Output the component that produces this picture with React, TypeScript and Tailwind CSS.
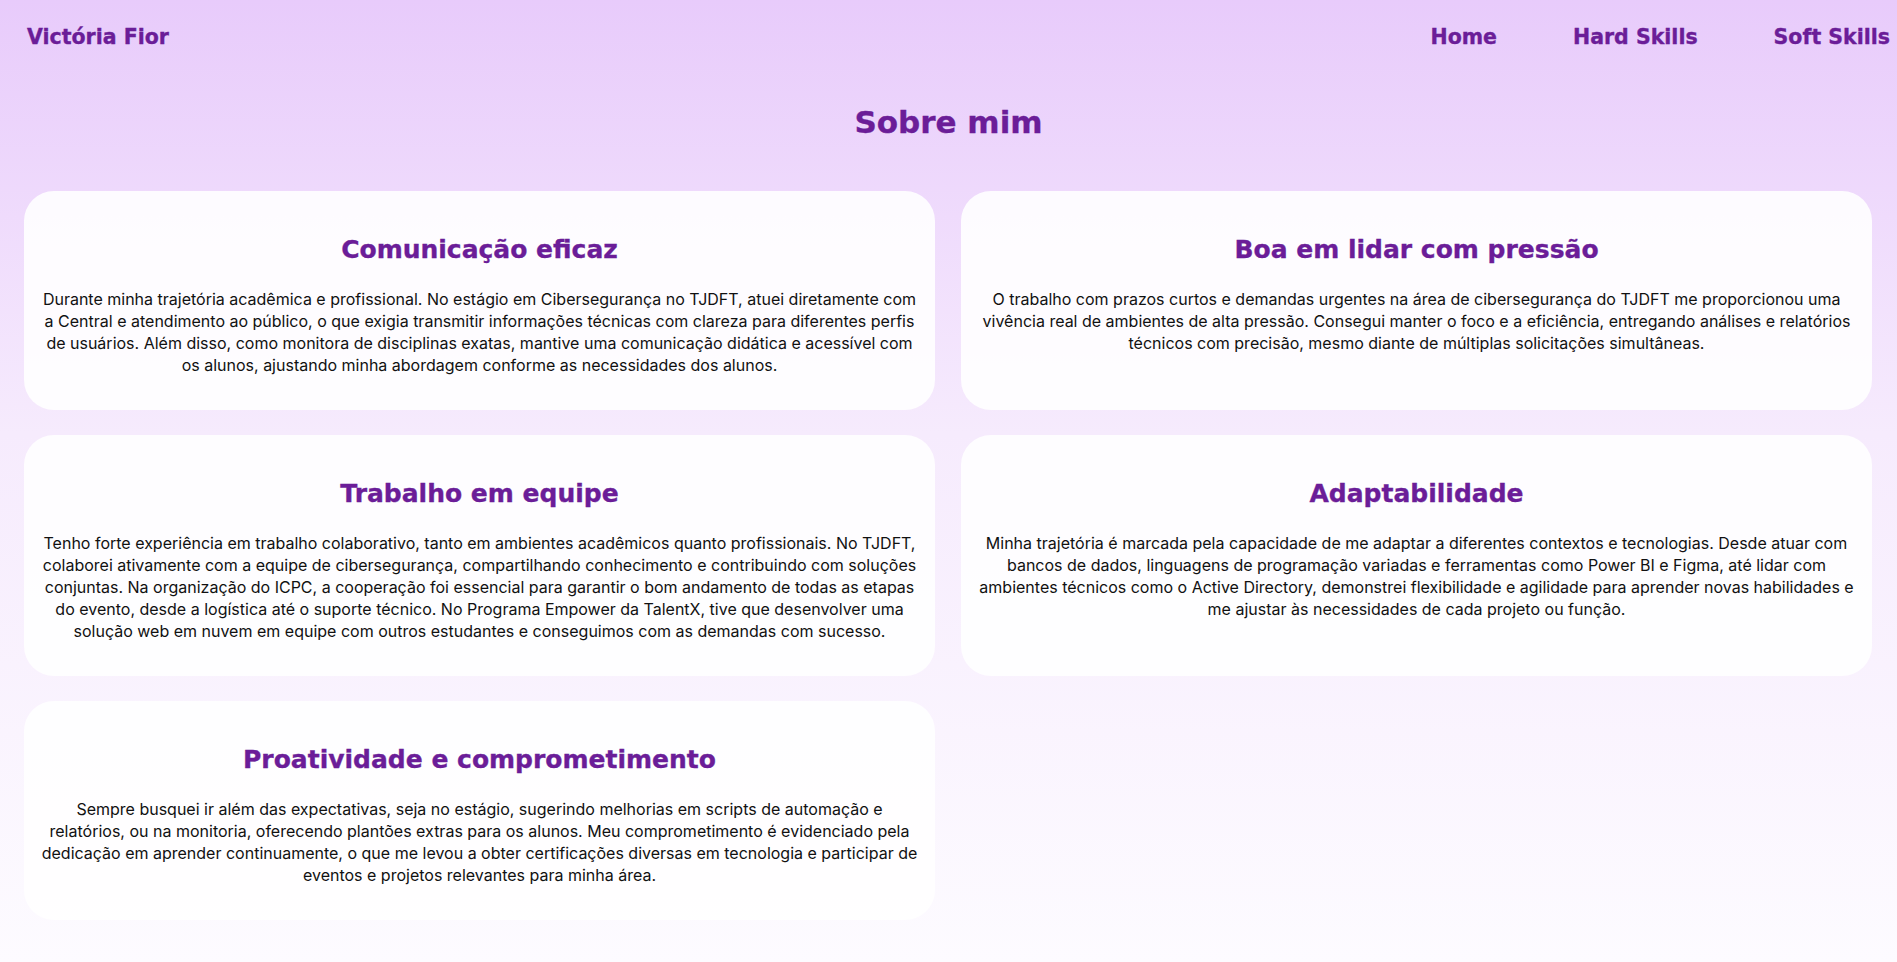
const cards = [
  {
    title: 'Comunicação eficaz',
    text: 'Durante minha trajetória acadêmica e profissional. No estágio em Cibersegurança no TJDFT, atuei diretamente com a Central e atendimento ao público, o que exigia transmitir informações técnicas com clareza para diferentes perfis de usuários. Além disso, como monitora de disciplinas exatas, mantive uma comunicação didática e acessível com os alunos, ajustando minha abordagem conforme as necessidades dos alunos.',
  },
  {
    title: 'Boa em lidar com pressão',
    text: 'O trabalho com prazos curtos e demandas urgentes na área de cibersegurança do TJDFT me proporcionou uma vivência real de ambientes de alta pressão. Consegui manter o foco e a eficiência, entregando análises e relatórios técnicos com precisão, mesmo diante de múltiplas solicitações simultâneas.',
  },
  {
    title: 'Trabalho em equipe',
    text: 'Tenho forte experiência em trabalho colaborativo, tanto em ambientes acadêmicos quanto profissionais. No TJDFT, colaborei ativamente com a equipe de cibersegurança, compartilhando conhecimento e contribuindo com soluções conjuntas. Na organização do ICPC, a cooperação foi essencial para garantir o bom andamento de todas as etapas do evento, desde a logística até o suporte técnico. No Programa Empower da TalentX, tive que desenvolver uma solução web em nuvem em equipe com outros estudantes e conseguimos com as demandas com sucesso.',
  },
  {
    title: 'Adaptabilidade',
    text: 'Minha trajetória é marcada pela capacidade de me adaptar a diferentes contextos e tecnologias. Desde atuar com bancos de dados, linguagens de programação variadas e ferramentas como Power BI e Figma, até lidar com ambientes técnicos como o Active Directory, demonstrei flexibilidade e agilidade para aprender novas habilidades e me ajustar às necessidades de cada projeto ou função.',
  },
  {
    title: 'Proatividade e comprometimento',
    text: 'Sempre busquei ir além das expectativas, seja no estágio, sugerindo melhorias em scripts de automação e relatórios, ou na monitoria, oferecendo plantões extras para os alunos. Meu comprometimento é evidenciado pela dedicação em aprender continuamente, o que me levou a obter certificações diversas em tecnologia e participar de eventos e projetos relevantes para minha área.',
  },
];

// wide heavy display face stand-in
const display =
  "font-['DejaVu_Sans',sans-serif] font-bold text-[#6b1d98] [-webkit-text-stroke:0.35px_#6b1d98]";

export default function App() {
  return (
    <div className="min-h-screen bg-gradient-to-b from-[#e8cbfb] via-[#f6ebfd] via-45% to-[#fdfbff] font-['Inter',sans-serif] text-[#111]">
      <header className="flex h-[75px] items-center justify-between pl-[27px] pr-[7px]">
        <span className={`${display} text-[20.5px]`}>Victória Fior</span>
        <nav className="flex gap-[76px]">
          <a className={`${display} text-[20.5px]`}>Home</a>
          <a className={`${display} text-[20.5px]`}>Hard Skills</a>
          <a className={`${display} text-[20.5px]`}>Soft Skills</a>
        </nav>
      </header>

      <h1 className={`${display} mt-[27px] text-center text-[31px] leading-10`}>Sobre mim</h1>

      <main className="mt-[49px] grid grid-cols-2 gap-x-[26px] gap-y-[25px] pb-10 pl-6 pr-[25px]">
        {cards.map((card) => (
          <section key={card.title} className="rounded-[30px] bg-white/90 px-4 pb-[34px] pt-[41px] text-center">
            <h2 className={`${display} mb-5 text-[25px] leading-9`}>{card.title}</h2>
            <p className="text-[16px] leading-[22px]">{card.text}</p>
          </section>
        ))}
      </main>
    </div>
  );
}
